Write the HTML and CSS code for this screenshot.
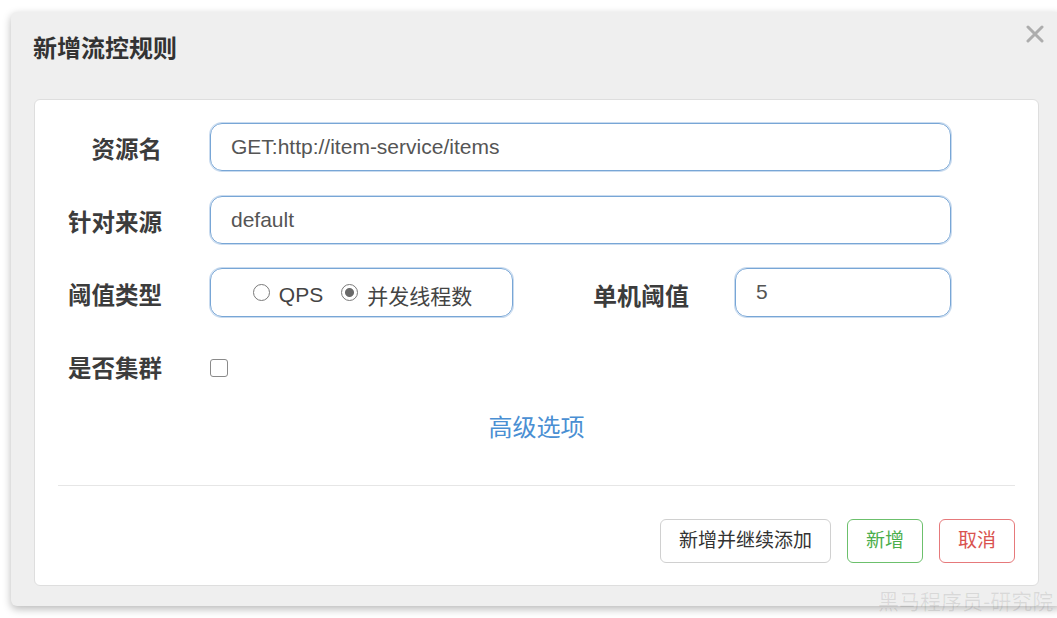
FILE: index.html
```html
<!DOCTYPE html>
<html lang="zh-CN">
<head>
<meta charset="utf-8">
<title>新增流控规则</title>
<link rel="stylesheet" href="styles.css">
</head>
<body>
<div class="modal">
  <div class="modal-header">
    <h4 class="modal-title">新增流控规则</h4>
    <button class="close" type="button" aria-label="关闭">
      <svg width="18" height="18" viewBox="0 0 18 18"><path d="M2 2 L16 16 M16 2 L2 16" stroke="#adadad" stroke-width="3" stroke-linecap="round"/></svg>
    </button>
  </div>
  <div class="card">
    <form class="form">
      <div class="row">
        <label class="label">资源名</label>
        <div class="field"><div class="input">GET:http://item-service/items</div></div>
      </div>
      <div class="row">
        <label class="label">针对来源</label>
        <div class="field"><div class="input">default</div></div>
      </div>
      <div class="row row-tall">
        <label class="label">阈值类型</label>
        <div class="field field-split">
          <div class="radio-box">
            <label class="radio"><span class="dot"></span><span class="radio-text">QPS</span></label>
            <label class="radio"><span class="dot dot-on"></span><span class="radio-text">并发线程数</span></label>
          </div>
          <label class="label label-inline">单机阈值</label>
          <div class="input input-small">5</div>
        </div>
      </div>
      <div class="row row-last">
        <label class="label label-last">是否集群</label>
        <div class="field"><span class="checkbox"></span></div>
      </div>
      <div class="advanced"><a class="advanced-link">高级选项</a></div>
      <div class="divider"></div>
      <div class="actions">
        <button type="button" class="btn btn-default">新增并继续添加</button>
        <button type="button" class="btn btn-success">新增</button>
        <button type="button" class="btn btn-danger">取消</button>
      </div>
    </form>
  </div>
</div>
<div class="watermark">黑马程序员-研究院</div>
</body>
</html>
```

FILE: styles.css
```css
* { box-sizing: border-box; }

html, body {
  margin: 0;
  padding: 0;
  width: 1057px;
  height: 618px;
  overflow: hidden;
  background: #ffffff;
  font-family: "Liberation Sans", "Noto Sans CJK SC", sans-serif;
  color: #333;
}

body { position: relative; }

.modal {
  margin: 12px 0 0 11px;
  width: 1051px;
  height: 594px;
  background: #efefef;
  border-radius: 6px;
  box-shadow: 0 3px 9px rgba(0, 0, 0, 0.28);
  padding: 0 23px 20px;
  display: flex;
  flex-direction: column;
}

.modal-header {
  display: flex;
  justify-content: space-between;
  align-items: flex-start;
  height: 87px;
  padding-top: 19px;
}

.modal-title {
  margin: 0 0 0 -1px;
  font-family: "Noto Sans CJK SC", sans-serif;
  font-weight: 700;
  font-size: 24px;
  line-height: 32px;
  color: #333;
}

.close {
  border: 0;
  background: none;
  padding: 0;
  margin: -6px -5px 0 0;
  width: 18px;
  height: 18px;
  display: flex;
}

.card {
  flex: 1;
  background: #fff;
  border: 1px solid #dedede;
  border-radius: 6px;
  padding: 23px 23px 22px;
}

.form { display: flex; flex-direction: column; }

.row {
  display: grid;
  grid-template-columns: 104px 741px;
  column-gap: 48px;
  height: 48px;
  align-items: center;
  margin-bottom: 25px;
}

.row-tall { height: 49px; margin-bottom: 27px; }
.row:nth-child(2) { margin-bottom: 24px; }
.row-last { margin-bottom: 17px; }

.label {
  text-align: right;
  font-family: "Noto Sans CJK SC", sans-serif;
  font-weight: 700;
  font-size: 23.5px;
  line-height: 30px;
  color: #3c3c3c;
  padding-top: 2px;
  white-space: nowrap;
}

.label-last { padding-top: 0; margin-top: -2px; }

.field { display: flex; align-items: center; height: 100%; }

.input {
  width: 100%;
  height: 48px;
  border: 1px solid #78a6d6;
  box-shadow: 0 0 0 1px rgba(120, 166, 214, 0.4);
  border-radius: 12px;
  padding: 0 20px 0;
  display: flex;
  align-items: center;
  font-size: 21px;
  color: #555;
}

.field-split { gap: 0; }

.radio-box {
  width: 303px;
  height: 49px;
  flex: none;
  border: 1px solid #78a6d6;
  box-shadow: 0 0 0 1px rgba(120, 166, 214, 0.4);
  border-radius: 12px;
  display: flex;
  align-items: center;
  justify-content: center;
  gap: 18px;
  padding-left: 2px;
}

.radio {
  display: flex;
  align-items: center;
  gap: 9px;
  font-size: 21px;
  color: #444;
  font-family: "Liberation Sans", "Noto Sans CJK SC", sans-serif;
}

.radio-text { padding-top: 5px; }

.dot {
  width: 17px;
  height: 17px;
  border-radius: 50%;
  border: 1.5px solid #7a7a7a;
  background: #fff;
}

.dot-on {
  background: radial-gradient(circle, #6a6a6a 0, #6a6a6a 4px, #fff 5px);
}

.label-inline {
  flex: 1;
  font-size: 24px;
  margin-right: 46px;
  padding-top: 4px;
}

.input-small { width: 216px; flex: none; height: 49px; padding-bottom: 2px; }

.checkbox {
  width: 18px;
  height: 18px;
  border: 1.5px solid #8a8a8a;
  border-radius: 3px;
  background: #fff;
}

.advanced {
  text-align: center;
  height: 36px;
  line-height: 34px;
  margin-bottom: 40px;
}

.advanced-link {
  font-family: "Noto Sans CJK SC", sans-serif;
  font-size: 24px;
  color: #4a8fd3;
  cursor: pointer;
}

.divider {
  height: 1px;
  background: #e6e6e6;
  margin-bottom: 33px;
}

.actions {
  display: flex;
  justify-content: flex-end;
  gap: 16px;
}

.btn {
  height: 44px;
  padding: 0 18px 5px;
  border-radius: 6px;
  background: #fff;
  font-family: "Noto Sans CJK SC", sans-serif;
  font-size: 19px;
  line-height: 30px;
  cursor: pointer;
}

.btn-default { border: 1px solid #d0d0d0; color: #333; }
.btn-success { border: 1px solid #6cc06c; color: #4cae4c; }
.btn-danger { border: 1px solid #e6797b; color: #d9534f; }

.watermark {
  position: absolute;
  left: 878px;
  top: 585px;
  font-family: "Noto Sans CJK SC", sans-serif;
  font-size: 21px;
  color: rgba(0, 0, 0, 0.09);
  white-space: nowrap;
}
```
